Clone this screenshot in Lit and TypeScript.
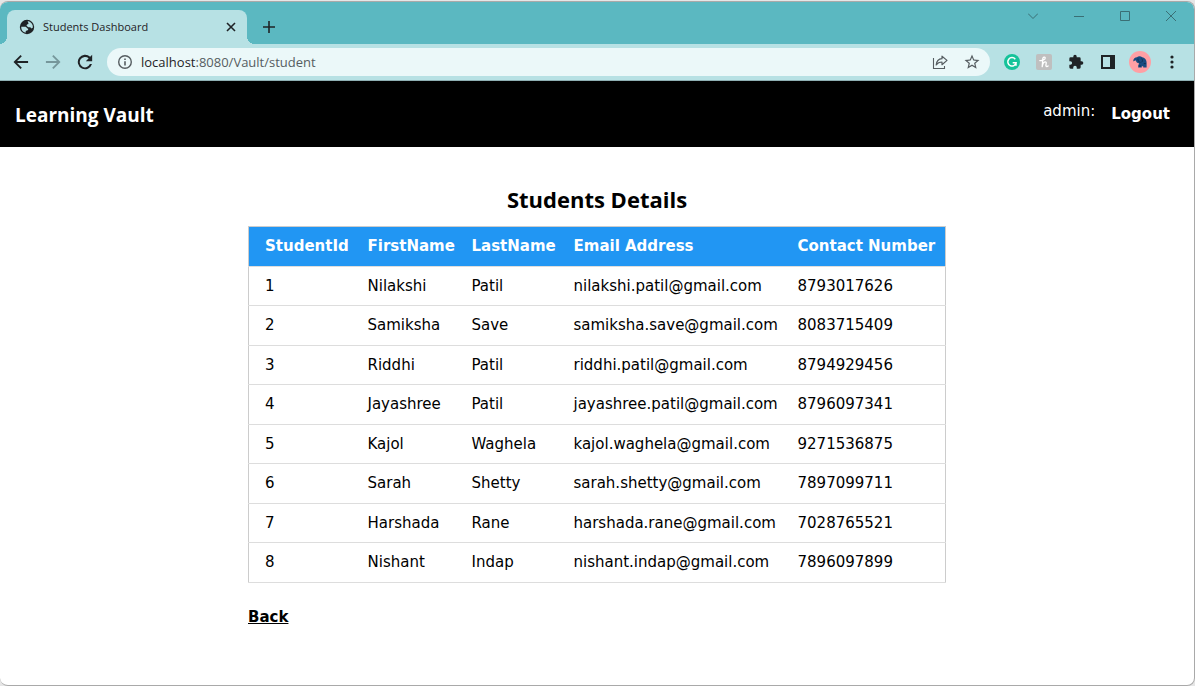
import { LitElement, html, svg, css } from "lit";
import { customElement, property } from "lit/decorators.js";

interface Student {
  id: number;
  first: string;
  last: string;
  email: string;
  phone: string;
}

const students: Student[] = [
  { id: 1, first: "Nilakshi", last: "Patil", email: "nilakshi.patil@gmail.com", phone: "8793017626" },
  { id: 2, first: "Samiksha", last: "Save", email: "samiksha.save@gmail.com", phone: "8083715409" },
  { id: 3, first: "Riddhi", last: "Patil", email: "riddhi.patil@gmail.com", phone: "8794929456" },
  { id: 4, first: "Jayashree", last: "Patil", email: "jayashree.patil@gmail.com", phone: "8796097341" },
  { id: 5, first: "Kajol", last: "Waghela", email: "kajol.waghela@gmail.com", phone: "9271536875" },
  { id: 6, first: "Sarah", last: "Shetty", email: "sarah.shetty@gmail.com", phone: "7897099711" },
  { id: 7, first: "Harshada", last: "Rane", email: "harshada.rane@gmail.com", phone: "7028765521" },
  { id: 8, first: "Nishant", last: "Indap", email: "nishant.indap@gmail.com", phone: "7896097899" },
];

const icon = (size: number, box: number, body: unknown) =>
  html`<svg width=${size} height=${size} viewBox="0 0 ${box} ${box}" fill="currentColor" aria-hidden="true">${body}</svg>`;

const globe = icon(16, 16, svg`
  <circle cx="8" cy="8" r="7.2" fill="#1f2326"></circle>
  <path fill="#b7e1e4" d="M2.2 7.800H6.500c1 0 1.200 1.600 2.200 1.700.8.1.6 1.300 0 1.700-.9.600-2 .3-2 1.300v1.300A6 6 0 0 1 2.200 7.800z"></path>
  <path fill="#b7e1e4" d="M8.600 2.100A6 6 0 0 1 13.900 8.500l-1.300.9-1.400-1.200H9.300L7.500 6.800 8 5.400l1.500-.4-.3-1.400z"></path>`);
const back = icon(20, 24, svg`<path d="M20.500 10.900H7.300l5.700-5.700L11.400 3.600 3 12l8.400 8.400 1.600-1.600-5.700-5.700h13.200z"></path>`);
const forward = icon(20, 24, svg`<path d="M3.500 10.900h13.200L11 5.200l1.600-1.600L21 12l-8.400 8.400-1.600-1.600 5.700-5.700H3.500z"></path>`);
const reload = icon(20, 24, svg`<path d="M18.200 5.800A8.700 8.700 0 1 0 20.400 14.500h-2.500A6.300 6.300 0 1 1 16.400 7.600L13 11h7.600V3.400z"></path>`);
const info = icon(16, 16, svg`<circle cx="8" cy="8" r="6.300" fill="none" stroke="currentColor" stroke-width="1.400"></circle><path d="M7.200 7.200h1.600v4.200H7.200zM7.200 4.500h1.600v1.600H7.200z"></path>`);
const share = icon(16, 16, svg`<path fill="none" stroke="currentColor" stroke-width="1.100" d="M1.500 4v10.500h11v-2.500"></path><path fill="none" stroke="currentColor" stroke-width="1.200" stroke-linejoin="round" d="M10 2.200v2.500C6.500 5 4.500 7.300 4.200 11c1.400-2.200 3.100-3 5.800-3v2.700L15 6.400z"></path>`);
const star = icon(18, 24, svg`<path d="m22 9.240-7.190-.62L12 2 9.190 8.630 2 9.240l5.460 4.730L5.820 21 12 17.270 18.180 21l-1.630-7.030zM12 15.400l-3.760 2.270 1-4.280-3.320-2.880 4.380-.38L12 6.100l1.710 4.040 4.380.38-3.320 2.880 1 4.280z"></path>`);
const grammar = icon(16, 16, svg`<circle cx="8" cy="8" r="8" fill="#15c39a"></circle><path fill="none" stroke="#fff" stroke-width="1.500" d="M11.300 5.200A4.200 4.200 0 1 0 12.100 8.700H8.700M12 11.800V8.700"></path>`);
const honey = icon(16, 16, svg`<rect width="16" height="16" rx="2" fill="#bfbfbf"></rect><path fill="none" stroke="#fff" stroke-width="1.300" stroke-linecap="round" stroke-linejoin="round" d="M3.800 6.600C6 7 9.600 5.400 9.200 3.800 8.800 2.700 7 3 6.800 4.700L6.200 12.700C6.700 9.800 8 7.800 9.500 7.900c1.500.1.300 2.500.4 3.700.1 1.200 1.300 1.100 2.200.4"></path>`);
const puzzle = icon(16, 24, svg`<path d="M20.500 11H19V7a2 2 0 0 0-2-2h-4V3.500a2.500 2.500 0 0 0-5 0V5H4a2 2 0 0 0-2 2v3.800h1.500a2.700 2.700 0 0 1 0 5.400H2V20a2 2 0 0 0 2 2h3.800v-1.500a2.700 2.700 0 0 1 5.400 0V22H17a2 2 0 0 0 2-2v-4h1.500a2.500 2.500 0 0 0 0-5z"></path>`);
const panel = icon(14, 14, svg`<path fill-rule="evenodd" d="M0 0h14v14H0zM2 2v10h7V2z"></path>`);
const avatar = icon(22, 22, svg`<circle cx="11" cy="11" r="11" fill="#ff9fa4"></circle>
  <path fill="#174b80" d="M4.200 10.200C4.300 7.500 6 6.200 8 6.200 9.200 4.900 11.800 4.900 13.200 6.200 16 6.600 17.800 9 17.600 12v4.600h-3.400v-1.400h-1.400v1.400H9.200v-2.400l1-1.700C8.300 12.300 7 11.200 6.900 9.600 5.800 9.300 5.600 10.600 4.200 10.200z"></path>
  <path fill="none" stroke="#0d2947" stroke-width=".8" d="M9 7.500c-.4 2 .6 3.600 2.400 3.900M12.600 7.600c1.200 1 1.200 2.800-.2 3.700M14.800 12.600h2M10 15h2"></path>`);
const dots = icon(16, 16, svg`<circle cx="8" cy="3" r="1.600"></circle><circle cx="8" cy="8" r="1.600"></circle><circle cx="8" cy="13" r="1.600"></circle>`);
const line = (size: number, width: number, d: string) =>
  icon(size, size, svg`<path fill="none" stroke="currentColor" stroke-width=${width} d=${d}></path>`);

@customElement("browser-chrome")
class BrowserChrome extends LitElement {
  @property() title = "";
  @property() host = "";
  @property() path = "";

  static styles = css`
    :host { display: block; font: 11px/16px "Open Sans", "Noto Sans", sans-serif; color: #1f2326; }
    button { border: 0; margin: 0; padding: 0; background: none; color: inherit; font: inherit; display: grid; place-items: center; }
    svg { display: block; }
    .strip { display: flex; height: 42px; background: #5bb8c1; padding-left: 7px; }
    .tab { position: relative; box-sizing: border-box; display: flex; align-items: center; gap: 8px; flex: 0 1 240px; margin-top: 8px; padding: 0 8px 0 12px; border-radius: 8px 8px 0 0; background: #b7e1e4; }
    .tab::before, .tab::after { content: ""; position: absolute; bottom: 0; width: 8px; height: 8px; }
    .tab::before { left: -8px; background: radial-gradient(circle at 0 0, transparent 8px, #b7e1e4 8px); }
    .tab::after { right: -8px; background: radial-gradient(circle at 100% 0, transparent 8px, #b7e1e4 8px); }
    .title { flex: 1; white-space: nowrap; overflow: hidden; }
    .close { width: 16px; height: 16px; }
    .new { width: 28px; height: 28px; margin: 11px 0 0 8px; }
    .controls { display: flex; margin-left: auto; color: #3a6f75; }
    .controls button { width: 46px; height: 28px; }
    .bar { display: flex; align-items: center; height: 36px; padding: 0 6px 0 5px; background: #b7e1e4; border-bottom: 1px solid #8fb0b3; }
    .bar button { flex: none; width: 32px; height: 32px; }
    .bar .off { color: #76979b; }
    .address { flex: 1; display: flex; align-items: center; height: 28px; margin: 0 6px; padding: 0 2px 0 10px; border-radius: 14px; background: #ebf8f9; color: #565d61; font-size: 13px; }
    .bar .address button { height: 28px; }
    .bar .address .site { width: 16px; margin-right: 8px; }
    .url { flex: 1; white-space: nowrap; }
    .url b { font-weight: 400; color: #1f2326; }
  `;

  render() {
    return html`
      <div class="strip">
        <div class="tab">
          ${globe}<span class="title">${this.title}</span>
          <button class="close" aria-label="Close tab">${line(10, 1.6, "M1 1l8 8M9 1L1 9")}</button>
        </div>
        <button class="new" aria-label="New tab">${line(12, 1.6, "M6 0v12M0 6h12")}</button>
        <div class="controls">
          <button aria-label="Search tabs">${line(10, 1, "M0 2.5l5 5 5-5")}</button>
          <button aria-label="Minimize">${line(10, 1, "M0 5.5h10")}</button>
          <button aria-label="Maximize">${line(10, 1, "M.5.5h9v9h-9z")}</button>
          <button aria-label="Close">${line(10, 1, "M0 0l10 10M10 0L0 10")}</button>
        </div>
      </div>
      <div class="bar">
        <button aria-label="Back">${back}</button>
        <button class="off" aria-label="Forward">${forward}</button>
        <button aria-label="Reload">${reload}</button>
        <div class="address">
          <button class="site" aria-label="Site information">${info}</button>
          <span class="url"><b>${this.host}</b>${this.path}</span>
          <button aria-label="Share">${share}</button>
          <button aria-label="Bookmark">${star}</button>
        </div>
        <button aria-label="Writing assistant">${grammar}</button>
        <button aria-label="Coupons">${honey}</button>
        <button aria-label="Extensions">${puzzle}</button>
        <button aria-label="Side panel">${panel}</button>
        <button aria-label="Profile">${avatar}</button>
        <button aria-label="Menu">${dots}</button>
      </div>
    `;
  }
}

@customElement("student-table")
class StudentTable extends LitElement {
  @property({ attribute: false }) rows: Student[] = [];

  static styles = css`
    :host { display: block; }
    table { width: 100%; table-layout: fixed; border-collapse: collapse; border: 1px solid #ccc; }
    tr { border-bottom: 1px solid #ddd; }
    thead tr { background: #2196f3; color: #fff; }
    th, td { box-sizing: border-box; padding: 8px; text-align: left; white-space: nowrap; }
    th:first-child, td:first-child { padding-left: 16px; }
    .id { width: 111px; }
    .first { width: 104px; }
    .last { width: 102px; }
    .email { width: 224px; }
  `;

  render() {
    return html`
      <table>
        <thead>
          <tr>
            <th class="id">StudentId</th>
            <th class="first">FirstName</th>
            <th class="last">LastName</th>
            <th class="email">Email Address</th>
            <th>Contact Number</th>
          </tr>
        </thead>
        <tbody>
          ${this.rows.map((s) => html`<tr><td>${s.id}</td><td>${s.first}</td><td>${s.last}</td><td>${s.email}</td><td>${s.phone}</td></tr>`)}
        </tbody>
      </table>
    `;
  }
}

@customElement("app-root")
class AppRoot extends LitElement {
  static styles = css`
    :host { display: flex; box-sizing: border-box; min-height: 100vh; padding-top: 1px; background: #e6e6e6; font: 15px/1.5 Verdana, "DejaVu Sans", sans-serif; color: #000; }
    .window { flex: 1; box-sizing: border-box; overflow: hidden; background: #fff; border: 1px solid #a9a9a9; border-left: 0; border-radius: 8px; }
    header { display: flex; justify-content: space-between; align-items: center; height: 66px; padding: 0 24px 0 15px; background: #000; color: #fff; }
    h1, h2 { margin: 0; font-family: "Segoe UI", "Open Sans", sans-serif; font-weight: 700; }
    h1 { font-size: 19px; line-height: 30px; padding-top: 2px; }
    h2 { font-size: 22px; line-height: 34px; margin-bottom: 10px; text-align: center; }
    a { color: inherit; font-weight: 700; }
    .account { display: flex; gap: 16px; align-items: flex-end; padding-bottom: 3px; }
    .user { padding-bottom: 3px; }
    .logout { text-decoration: none; }
    main { max-width: 698px; margin: 0 auto; padding: 35px 16px; }
    .back { display: inline-block; margin-top: 23px; }
  `;

  render() {
    return html`
      <div class="window">
        <browser-chrome title="Students Dashboard" host="localhost" path=":8080/Vault/student"></browser-chrome>
        <header>
          <h1>Learning Vault</h1>
          <div class="account">
            <span class="user">admin:</span>
            <a class="logout" href="#logout">Logout</a>
          </div>
        </header>
        <main>
          <h2>Students Details</h2>
          <student-table .rows=${students}></student-table>
          <a class="back" href="#back">Back</a>
        </main>
      </div>
    `;
  }
}
